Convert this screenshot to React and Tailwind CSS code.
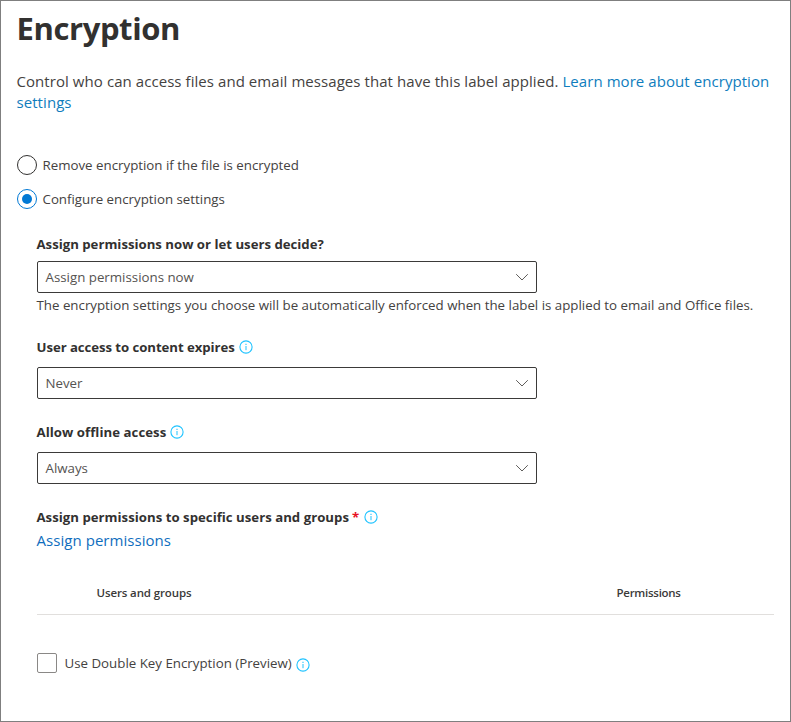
function InfoIcon({ className = "" }) {
  return (
    <svg className={`h-[14px] w-[14px] shrink-0 ${className}`} viewBox="0 0 14 14" fill="none" aria-hidden="true">
      <circle cx="7" cy="7" r="6.1" stroke="#1fc3ff" strokeWidth="1.1" />
      <path d="M7 6v4.2" stroke="#1fc3ff" strokeWidth="1" />
      <path d="M7 3.8v1.1" stroke="#1fc3ff" strokeWidth="1.1" />
    </svg>
  );
}

function Radio({ checked, children }) {
  return (
    <label className="flex h-5 items-center gap-[6px]">
      <span
        className={`flex h-5 w-5 shrink-0 items-center justify-center rounded-full border ${
          checked ? "border-[#0078d4]" : "border-[#323130]"
        }`}
      >
        {checked && <span className="h-[10px] w-[10px] rounded-full bg-[#0078d4]" />}
      </span>
      {children}
    </label>
  );
}

function Select({ children }) {
  return (
    <div className="flex h-8 w-[500px] items-center justify-between rounded-[2px] border border-[#3b3a39] pr-[6.5px] pl-2 text-[#555351]">
      {children}
      <svg className="h-[14px] w-[14px]" viewBox="0 0 14 14" fill="none" aria-hidden="true">
        <path d="M1.2 4.2 7 10l5.8-5.8" stroke="#605e5c" strokeWidth="1" />
      </svg>
    </div>
  );
}

function Heading({ children }) {
  return <div className="flex h-5 items-center text-[13.2px] font-bold text-[#323130]">{children}</div>;
}

export default function App() {
  return (
    <main className="h-[722px] w-[791px] overflow-hidden border border-[#7f7f7f] bg-white pl-[15.5px] font-['Open_Sans','Noto_Sans',sans-serif] text-[13.3px] leading-5 whitespace-nowrap text-[#444241]">
      <h1 className="mt-[7px] h-10 text-[31px] leading-10 font-bold tracking-[-0.4px] text-[#323130]">
        <span>Encryption</span>
      </h1>
      <p className="mt-[23px] text-[15px] leading-[21px] tracking-[0.065px]">
        <span>Control who can access files and email messages that have this label applied. </span>
        <a className="text-[#0f7dbd]">
          <span>Learn more about encryption</span>
          <br />
          settings
        </a>
      </p>
      <div className="mt-[42px] flex flex-col gap-[14px]">
        <Radio>
          <span>Remove encryption if the file is encrypted</span>
        </Radio>
        <Radio checked>
          <span>Configure encryption settings</span>
        </Radio>
      </div>

      <section className="ml-5 w-[737px]">
        <div className="pt-[25px]">
          <Heading>
            <span>Assign permissions now or let users decide?</span>
          </Heading>
          <div className="mt-[7px]">
            <Select>
              <span>Assign permissions now</span>
            </Select>
          </div>
          <p className="mt-[2px]">
            <span>The encryption settings you choose will be automatically enforced when the label is applied to email and Office files.</span>
          </p>
        </div>
        <div className="mt-[22px]">
          <Heading>
            <span className="tracking-[-0.06px]">User access to content expires</span>
            <InfoIcon className="ml-1" />
          </Heading>
          <div className="mt-[10px]">
            <Select>
              <span>Never</span>
            </Select>
          </div>
        </div>
        <div className="mt-[23px]">
          <Heading>
            <span className="tracking-[0.05px]">Allow offline access</span>
            <InfoIcon className="ml-1" />
          </Heading>
          <div className="mt-[10px]">
            <Select>
              <span>Always</span>
            </Select>
          </div>
        </div>
        <div className="mt-[23px]">
          <Heading>
            <span className="tracking-[0.02px]">Assign permissions to specific users and groups</span>
            <span className="ml-[3px] text-[#e81123]">*</span>
            <InfoIcon className="ml-[5px]" />
          </Heading>
          <a className="mt-[3px] block h-5 text-[15px] tracking-[0.05px] text-[#106ebe]">
            <span>Assign permissions</span>
          </a>
        </div>
        <div className="mt-[21px] grid h-[44px] grid-cols-[520px_1fr] items-center border-b border-[#e1dfdd] pl-[60px] text-[11.5px] font-semibold text-[#3b3a39]">
          <span className="tracking-[-0.12px]">Users and groups</span>
          <span className="tracking-[-0.27px]">Permissions</span>
        </div>
        <label className="mt-[38px] flex h-5 items-center">
          <span className="h-5 w-5 shrink-0 rounded-[2px] border border-[#8a8886]" />
          <span className="ml-2">Use Double Key Encryption (Preview)</span>
          <InfoIcon className="mt-[3px] ml-1" />
        </label>
      </section>
    </main>
  );
}
